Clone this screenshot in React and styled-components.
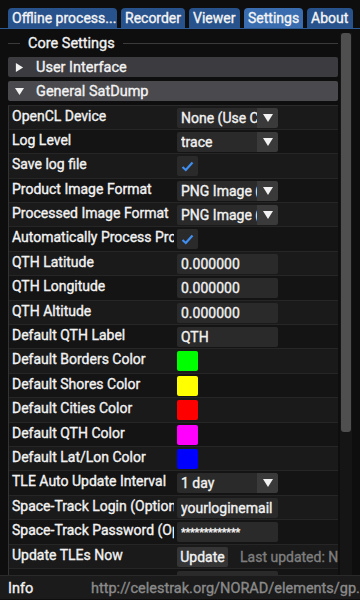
import React from 'react'
import styled, { createGlobalStyle } from 'styled-components'

const GlobalStyle = createGlobalStyle`
    html, body {
        margin: 0;
        padding: 0;
        background: #0e0e0e;
    }
    body {
        font-family: Roboto, "Liberation Sans", sans-serif;
        color: #f2f2f2;
        -webkit-text-stroke: 0.35px currentColor;
    }
`;

const Screen = styled.div`
    width: 360px;
    height: 600px;
    display: flex;
    flex-direction: column;
    overflow: hidden;
    background: #0e0e0e;
`;

const TabBar = styled.div`
    display: flex;
    gap: 4px;
    padding: 8px 0 0 8px;
    height: 20px;
    flex: none;
    border-bottom: 1px solid #2c5a94;
`;

const Tab = styled.div`
    width: ${(p) => p.w}px;
    height: 20px;
    box-sizing: border-box;
    border-radius: 4px 4px 0 0;
    background: ${(p) => (p.active ? '#3a6db0' : '#28528c')};
    font-size: 14px;
    line-height: 21px;
    padding-left: 4px;
    white-space: nowrap;
    overflow: hidden;
    color: #f4f4f4;
`;

const Body = styled.div`
    display: flex;
    height: 546px;
    flex: none;
    padding-left: 8px;
`;

const MainColumn = styled.div`
    width: 330px;
    overflow: hidden;
    padding-top: 6px;
`;

const ScrollTrack = styled.div`
    width: 12px;
    margin: 4px 0 0 2px;
    height: 542px;
    background: #151515;
    display: flex;
    justify-content: center;
`;

const ScrollThumb = styled.div`
    width: 10px;
    height: 399px;
    border-radius: 3px;
    background: #4f4f4f;
`;

const SeparatorRow = styled.div`
    display: flex;
    align-items: center;
    height: 16px;
    gap: 8px;
    margin-bottom: 6px;
    font-size: 14.5px;
`;

const SeparatorLine = styled.div`
    height: 1px;
    background: #3b3b3b;
    flex: ${(p) => (p.grow ? 1 : 'none')};
    width: ${(p) => (p.grow ? 'auto' : '12px')};
`;

const Header = styled.div`
    display: flex;
    align-items: center;
    height: 20px;
    border-radius: 2px;
    background: ${(p) => (p.open ? '#4a4a4e' : '#3c3c40')};
    font-size: 14.5px;
    margin-bottom: ${(p) => (p.open ? '3.5px' : '4px')};
    padding-left: 7px;
    gap: 12px;
`;

const Table = styled.div`
    display: flex;
    flex-direction: column;
    border-left: 1px solid #333;
    border-top: 1px solid #2a2a2a;
`;

const Row = styled.div`
    display: grid;
    grid-template-columns: 168px 1fr;
    height: 24.4px;
    flex: none;
    box-sizing: border-box;
    border-bottom: 1px solid #262626;
    background: ${(p) => (p.odd ? '#141414' : '#1a1a1a')};
    overflow: hidden;
`;

const Label = styled.div`
    font-size: 14px;
    line-height: 18px;
    padding: 1px 0 0 3px;
    white-space: nowrap;
    overflow: hidden;
    width: 162px;
`;

const Cell = styled.div`
    display: flex;
    align-items: flex-start;
    gap: 12px;
    padding-top: 2px;
    overflow: hidden;
    white-space: nowrap;
`;

const Frame = styled.div`
    width: ${(p) => p.w || 101}px;
    height: 20px;
    box-sizing: border-box;
    background: #2a2a2a;
    border-radius: 2px;
    font-size: 14px;
    line-height: 21px;
    padding-left: 4px;
    display: flex;
    overflow: hidden;
    flex: none;
`;

const FrameText = styled.span`
    flex: 1;
    overflow: hidden;
    white-space: nowrap;
    letter-spacing: ${(p) => (p.secret ? '-0.2px' : '0')};
    font-size: ${(p) => (p.secret ? '11px' : 'inherit')};
`;

const ArrowButton = styled.div`
    width: 21px;
    height: 20px;
    flex: none;
    background: #3a3a3a;
    display: flex;
    align-items: center;
    justify-content: center;
    border-radius: 0 2px 2px 0;
`;

const CheckBox = styled.div`
    width: 21px;
    height: 20px;
    background: #2a2a2a;
    border-radius: 2px;
    display: flex;
    align-items: center;
    justify-content: center;
`;

const Swatch = styled.div`
    width: 21px;
    height: 20px;
    border-radius: 2px;
    background: ${(p) => p.color};
`;

const Button = styled.div`
    width: 51px;
    height: 20px;
    box-sizing: border-box;
    background: #353535;
    border-radius: 2px;
    font-size: 14px;
    line-height: 21px;
    text-align: center;
    flex: none;
`;

const Muted = styled.span`
    font-size: 14px;
    line-height: 21px;
    color: #7e7e7e;
`;

const Footer = styled.div`
    height: 24px;
    flex: none;
    border-top: 1px solid #2a2a2a;
    background: #1b1b1b;
    display: flex;
    align-items: center;
    padding: 2px 0 0 8px;
    box-sizing: border-box;
    font-size: 14.5px;
    white-space: nowrap;
    overflow: hidden;
`;

const FooterTitle = styled.span`
    width: 83px;
    flex: none;
`;

const FooterUrl = styled.span`
    color: #8a8a8a;
`;

const Triangle = ({ down, size = 9 }) => (
    <svg width={size} height={size} viewBox="0 0 10 10">
        {down ? <polygon points="0,1 10,1 5,9" fill="#f2f2f2" /> : <polygon points="1,0 9,5 1,10" fill="#f2f2f2" />}
    </svg>
);

const Check = () => (
    <svg width="13" height="11" viewBox="0 0 13 11">
        <polyline points="1.5,6 4.8,9 11.5,1.5" fill="none" stroke="#3f8ef0" strokeWidth="2.2" />
    </svg>
);

const Combo = ({ value }) => (
    <Frame>
        <FrameText>{value}</FrameText>
        <ArrowButton><Triangle down size={10} /></ArrowButton>
    </Frame>
);

const rows = [
    { label: 'OpenCL Device', type: 'combo', value: 'None (Use CPU)' },
    { label: 'Log Level', type: 'combo', value: 'trace' },
    { label: 'Save log file', type: 'check' },
    { label: 'Product Image Format', type: 'combo', value: 'PNG Image (.png)' },
    { label: 'Processed Image Format', type: 'combo', value: 'PNG Image (.png)' },
    { label: 'Automatically Process Products', type: 'check' },
    { label: 'QTH Latitude', type: 'input', value: '0.000000' },
    { label: 'QTH Longitude', type: 'input', value: '0.000000' },
    { label: 'QTH Altitude', type: 'input', value: '0.000000' },
    { label: 'Default QTH Label', type: 'input', value: 'QTH' },
    { label: 'Default Borders Color', type: 'color', value: '#00ff00' },
    { label: 'Default Shores Color', type: 'color', value: '#ffff00' },
    { label: 'Default Cities Color', type: 'color', value: '#ff0000' },
    { label: 'Default QTH Color', type: 'color', value: '#ff00ff' },
    { label: 'Default Lat/Lon Color', type: 'color', value: '#0000ff' },
    { label: 'TLE Auto Update Interval', type: 'combo', value: '1 day' },
    { label: 'Space-Track Login (Optional)', type: 'input', value: 'yourloginemail' },
    { label: 'Space-Track Password (Optional)', type: 'secret', value: '*************' },
    { label: 'Update TLEs Now', type: 'update' },
    { label: '', type: 'input', value: '' },
];

function renderWidget(row) {
    switch (row.type) {
        case 'combo':
            return <Combo value={row.value} />;
        case 'check':
            return <CheckBox><Check /></CheckBox>;
        case 'color':
            return <Swatch color={row.value} />;
        case 'secret':
            return <Frame><FrameText secret>{row.value}</FrameText></Frame>;
        case 'update':
            return (
                <>
                    <Button>Update</Button>
                    <Muted>Last updated: Never</Muted>
                </>
            );
        default:
            return <Frame><FrameText>{row.value}</FrameText></Frame>;
    }
}

export default function App() {
    const tabs = [
        { name: 'Offline process...', w: 109 },
        { name: 'Recorder', w: 64 },
        { name: 'Viewer', w: 51 },
        { name: 'Settings', w: 59, active: true },
        { name: 'About', w: 46 },
    ];

    return (
        <Screen>
            <GlobalStyle />
            <TabBar>
                {tabs.map((t) => (
                    <Tab key={t.name} w={t.w} active={t.active}>{t.name}</Tab>
                ))}
            </TabBar>
            <Body>
                <MainColumn>
                    <SeparatorRow>
                        <SeparatorLine />
                        <span>Core Settings</span>
                        <SeparatorLine grow />
                    </SeparatorRow>
                    <Header>
                        <Triangle />
                        User Interface
                    </Header>
                    <Header open>
                        <Triangle down />
                        General SatDump
                    </Header>
                    <Table>
                        {rows.map((row, i) => (
                            <Row key={i} odd={i % 2 === 1}>
                                <Label>{row.label}</Label>
                                <Cell>{renderWidget(row)}</Cell>
                            </Row>
                        ))}
                    </Table>
                </MainColumn>
                <ScrollTrack>
                    <ScrollThumb />
                </ScrollTrack>
            </Body>
            <Footer>
                <FooterTitle>Info</FooterTitle>
                <FooterUrl>http://celestrak.org/NORAD/elements/gp.php?GROUP=active</FooterUrl>
            </Footer>
        </Screen>
    )
}
